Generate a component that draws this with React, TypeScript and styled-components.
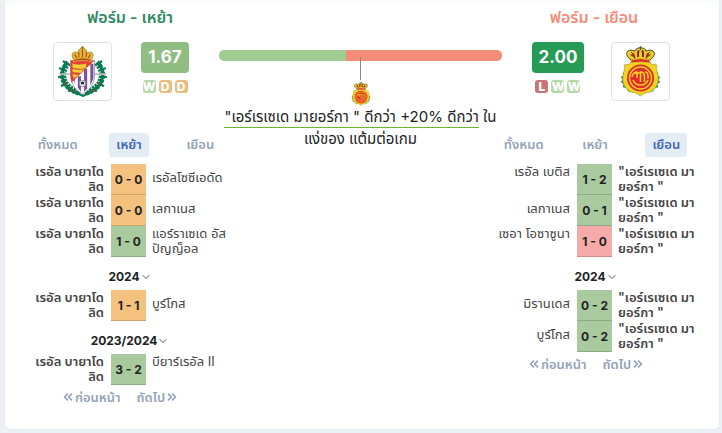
import React, { useState } from "react";
import styled, { createGlobalStyle } from "styled-components";
import { FiChevronDown, FiChevronsLeft, FiChevronsRight } from "react-icons/fi";

const GlobalStyle = createGlobalStyle`
  * { box-sizing: border-box; }
  body {
    margin: 0;
    background: #edf1f5;
    color: #222;
    font-family: Inter, "Noto Sans Thai", "Noto Sans", sans-serif;
    font-size: 13px;
  }
  button { font: inherit; border: 0; background: none; padding: 0; cursor: pointer; }
`;

type Side = "home" | "away";
type Outcome = "W" | "D" | "L";

const Card = styled.main`
  display: grid;
  grid-template-columns: 190px minmax(0, 1fr) 190px;
  margin: 0 3px 5px 5px;
  padding: 7px 32px 22px 26px;
  background: linear-gradient(#f8fafa, #fff 6px);
  border-radius: 0 0 5px 5px;
  box-shadow: 0 1px 3px #e3e8ee;
`;

const TeamPanel = styled.section`
  display: flex;
  flex-direction: column;
  min-width: 0;
`;

const Title = styled.h2<{ $side: Side }>`
  margin: 0 0 15px;
  padding-left: ${(p) => (p.$side === "home" ? 8 : 4)}px;
  text-align: center;
  font-size: 16px;
  line-height: 20px;
  font-weight: 600;
  color: ${(p) => (p.$side === "home" ? "#2f8a63" : "#f58b78")};
`;

const Summary = styled.div<{ $side: Side }>`
  display: flex;
  flex-direction: ${(p) => (p.$side === "home" ? "row" : "row-reverse")};
  justify-content: center;
  gap: ${(p) => (p.$side === "home" ? 29 : 27)}px;
  height: 59px;
  padding: ${(p) => (p.$side === "home" ? "0 10px 0 0" : "0 0 0 18px")};
`;

const CrestBox = styled.div`
  width: 59px;
  height: 59px;
  padding: 3px;
  border: 1px solid #dfe1ea;
  border-radius: 4px;
  background: #fff;
  svg { display: block; width: 100%; height: 100%; }
`;

const Form = styled.div`
  display: flex;
  flex-direction: column;
  align-items: center;
  gap: 7px;
`;

const Points = styled.strong<{ $side: Side }>`
  padding: 0 7px;
  border-radius: 4px;
  font-size: 17px;
  line-height: 31px;
  font-weight: 700;
  color: #fff;
  background: ${(p) => (p.$side === "home" ? "#90bd82" : "#259b55")};
`;

const Results = styled.div`
  display: flex;
  gap: 3px;
`;

const badgeColors: Record<Outcome, string> = { W: "#b4d8a6", D: "#e9bd7d", L: "#c97475" };

const ResultBadge = styled.span<{ $result: Outcome }>`
  display: flex;
  justify-content: center;
  width: 13px;
  height: 13px;
  border-radius: 3px;
  font-size: 12px;
  line-height: 13px;
  font-weight: 800;
  color: #fff;
  background: ${(p) => badgeColors[p.$result]};
`;

const Tabs = styled.div`
  display: grid;
  grid-template-columns: repeat(3, 1fr);
  justify-items: center;
  margin: 32px -15px 7px -9px;
`;

const Tab = styled.button<{ $active: boolean }>`
  height: 24px;
  padding: 0 7px 2px;
  border-radius: 3px;
  white-space: nowrap;
  font-size: 13px;
  line-height: 22px;
  font-weight: 600;
  color: ${(p) => (p.$active ? "#4267b5" : "#94a3b8")};
  background: ${(p) => (p.$active ? "#e4ecf6" : "transparent")};
`;

const Matches = styled.table`
  width: 202px;
  table-layout: fixed;
  border-collapse: collapse;
`;

const Col = styled.col<{ $w: number }>`
  width: ${(p) => p.$w}px;
`;

const Name = styled.td<{ $strong: boolean; $first: boolean; $low: boolean }>`
  padding: ${(p) => (p.$low ? 6 : 0)}px ${(p) => (p.$first ? 7 : 0)}px 0 ${(p) => (p.$first ? 0 : 6)}px;
  vertical-align: top;
  text-align: ${(p) => (p.$first ? "right" : "left")};
  white-space: pre;
  font-size: 13px;
  line-height: 15px;
  font-weight: ${(p) => (p.$strong ? 600 : 400)};
  color: #444;
`;

const scoreColors: Record<Outcome, [string, string]> = {
  W: ["#a8ca9e", "#8cab84"],
  D: ["#f5c17f", "#cba36d"],
  L: ["#f6aba8", "#cc908e"],
};

const Score = styled.td<{ $result: Outcome }>`
  height: 31px;
  padding: 0;
  text-align: center;
  white-space: nowrap;
  font-size: 12px;
  font-weight: 700;
  background: ${(p) => scoreColors[p.$result][0]};
  box-shadow: inset 0 -1px ${(p) => scoreColors[p.$result][1]};
`;

const SeasonCell = styled.th`
  height: 33px;
  padding: 6px 4px 0 0;
`;

const SeasonButton = styled.button`
  display: inline-flex;
  align-items: center;
  font-size: 12px;
  line-height: 20px;
  font-weight: 700;
  color: #222;
  svg { width: 12px; height: 12px; color: #555; }
`;

const Pager = styled.nav`
  display: flex;
  justify-content: center;
  gap: 16px;
  padding-right: 12px;
  margin-top: 2px;
`;

const PageButton = styled.button`
  display: inline-flex;
  align-items: center;
  font-size: 13px;
  line-height: 20px;
  font-weight: 600;
  white-space: nowrap;
  color: #94a3b8;
  svg { width: 14px; height: 14px; stroke-width: 3; }
`;

const Comparison = styled.section`
  display: flex;
  flex-direction: column;
  align-items: center;
  margin: 43px -5px 0 -2px;
  height: 108px;
`;

const Bar = styled.div`
  display: flex;
  width: 100%;
  height: 11px;
  border-radius: 5px;
  overflow: hidden;
`;

const Share = styled.div<{ $side: Side }>`
  flex: ${(p) => (p.$side === "home" ? 45 : 55)};
  background: ${(p) => (p.$side === "home" ? "#a2cd92" : "#f58c77")};
`;

const Pointer = styled.div`
  width: 1px;
  height: 23px;
  margin-top: -4px;
  background: #888;
  z-index: 1;
`;

const SmallCrest = styled.div`
  width: 24px;
  height: 24px;
  margin-top: 2px;
  svg { display: block; width: 100%; height: 100%; }
`;

const Verdict = styled.p`
  margin: 0;
  text-align: center;
  white-space: nowrap;
  font-size: 15px;
  line-height: 22px;
  color: #222;
`;

const Highlight = styled.span`
  display: inline-block;
  height: 21px;
  line-height: 20px;
  border-bottom: 1px solid #6cb52d;
`;

function HomeCrest() {
  return (
    <svg viewBox="1 0 49 49" role="img" aria-label="เรอัล บายาโดลิด">
      <g fill="none" stroke="#087a50">
        <g strokeWidth="3">
          <path d="M11 16C2 25 5 41 23 46" />
          <path d="M40 16C49 25 46 41 28 46" />
        </g>
        <g strokeWidth="6" strokeDasharray="2.5 1">
          <path d="M12 16C3 25 5 40 23 45" />
          <path d="M39 16C48 25 46 40 28 45" />
        </g>
        <path d="m9 17-2-3m0 9-4-2m4 8-5 1m7 5-4 4m9 1-2 4M42 17l2-3m0 9 4-2m-4 8 5 1m-7 5 4 4m-9 1 2 4M20 45l6 3 6-3" strokeWidth="2" />
      </g>
      <g fill="#d82c35">
        <circle cx="5" cy="27" r="1" /><circle cx="9" cy="36" r="1" /><circle cx="15" cy="43" r="1" />
        <circle cx="46" cy="27" r="1" /><circle cx="42" cy="36" r="1" /><circle cx="36" cy="43" r="1" />
      </g>
      <path d="M3 27h45" stroke="#b8bec1" strokeWidth="1.6" />
      <path d="M14 14h23v14c0 8-5 15-11.500 18C19 43 14 36 14 28Z" fill="#fff" stroke="#7a6598" strokeWidth=".6" />
      <path d="M33 17h3v14l-3 7ZM27 22h3v19l-3 3ZM21 29h3v15l-3-4ZM16 31h2v5Z" fill="#7953a0" />
      <path d="M14 14h23L15 35c-1-4-1-8-1-21Z" fill="#e63c38" />
      <path d="m16 17 6 1 7-1v4l-5 1-8-1Zm0 5 7 1 4-1-3 4-8-1Zm0 5 6 1-5 3Z" fill="#f7d13b" stroke="#cf9b22" strokeWidth=".4" />
      <circle cx="25.500" cy="36" r="3" fill="#fff" stroke="#777" strokeWidth=".7" />
      <path d="m23.500 35 2-1 2 1-1 2h-2Z" fill="#292933" />
      <path d="M17 13c-4-6 1-9 4-6 0-4 3-5 4.500-5S30 3 30 7c4-3 8 0 4 6Z" fill="#e0b92d" stroke="#8b6b20" strokeWidth=".6" />
      <path d="M20 12 18 8m4 3V6m3.500 5V3m3.500 8V6m2 6 2-4" stroke="#b63c34" strokeWidth="1" />
      <path d="M17 13q8.500-3 17 0v2q-8.500-2-17 0Z" fill="#be3030" stroke="#d6ae29" />
      <path d="M25.500 0v4M24 1.500h3" stroke="#9c7920" />
    </svg>
  );
}

function AwayCrest() {
  return (
    <svg viewBox="0 0 51 51" role="img" aria-label="เอร์เรเซเด มายอร์กา">
      <g fill="#3f9d6c" stroke="#16754f" strokeWidth=".5">
        <path d="m11 25-3 2 1 3-3 1 2 3-2 2 3 2-1 3 4 1 1 3 5 1V25ZM40 25l3 2-1 3 3 1-2 3 2 2-3 2 1 3-4 1-1 3-5 1V25Z" />
      </g>
      <path d="M16 16h19l1 2 6 1c-2 3 1 7 1 11 1 7-2 13-8 16l-5 1-4.500 3L21 47l-5-1C10 43 7 37 8 30c0-4 3-8 1-11l6-1Z" fill="#f0d51f" stroke="#9f8b21" strokeWidth=".6" />
      <circle cx="25.500" cy="32" r="13.500" fill="#e52a2e" />
      <circle cx="25.500" cy="32" r="11" fill="none" stroke="#f7d61f" strokeWidth="1.300" />
      <g fill="none" stroke="#f7d61f" strokeWidth="1.500">
        <path d="M17 31q1-5 5-5v6M25.500 25v11M25.500 26q4 0 4 5v5M30 26q3 0 3 4v3M19 27h6" />
        <path d="M18 34q2 5 7.500 5t7.500-5" />
      </g>
      <path d="M16 14C8 8 12 2 20 5c1-3 3-3 5.500-3S30 2 31 5c8-3 12 3 4 9Z" fill="#e6cc27" stroke="#38351f" strokeWidth=".9" />
      <path d="m15 9 4-2 1 5Zm7-4 2-1v7h-2Zm5-1 2 1v6h-2Zm5 3 4 2-5 3Z" fill="#c82631" />
      <path d="M16 6q4 2 4 7m4-9-1 7m4-7 1 7m7-5q-4 2-4 7" fill="none" stroke="#3d382c" strokeWidth=".9" />
      <path d="M16 14q9.500-3 19 0v3q-9.500-2-19 0Z" fill="#dc2b2d" stroke="#e0c026" />
      <path d="M25.500 0v4M24 1.500h3" stroke="#6f6626" />
    </svg>
  );
}

interface Match {
  left: string;
  right: string;
  score: string;
  result: Outcome;
  low?: boolean;
  season?: string;
}

interface Team {
  side: Side;
  title: string;
  points: string;
  form: Outcome[];
  tab: number;
  matches: Match[];
}

const home = "เรอัล บายาโด\nลิด";
const away = '"เอร์เรเซเด มา\nยอร์กา "';

const teams: Record<Side, Team> = {
  home: {
    side: "home",
    title: "ฟอร์ม - เหย้า",
    points: "1.67",
    form: ["W", "D", "D"],
    tab: 1,
    matches: [
      { left: home, right: "เรอัลโซซีเอดัด", score: "0 - 0", result: "D", low: true },
      { left: home, right: "เลกาเนส", score: "0 - 0", result: "D", low: true },
      { left: home, right: "แอร์ราเซเด อัส\nปัญญ็อล", score: "1 - 0", result: "W" },
      { left: home, right: "บูร์โกส", score: "1 - 1", result: "D", low: true, season: "2024" },
      { left: home, right: "บียาร์เรอัล II", score: "3 - 2", result: "W", season: "2023/2024" },
    ],
  },
  away: {
    side: "away",
    title: "ฟอร์ม - เยือน",
    points: "2.00",
    form: ["L", "W", "W"],
    tab: 2,
    matches: [
      { left: "เรอัล เบติส", right: away, score: "1 - 2", result: "W" },
      { left: "เลกาเนส", right: away, score: "0 - 1", result: "W", low: true },
      { left: "เซอา โอซาซูนา", right: away, score: "1 - 0", result: "L" },
      { left: "มิรานเดส", right: away, score: "0 - 2", result: "W", low: true, season: "2024" },
      { left: "บูร์โกส", right: away, score: "0 - 2", result: "W", low: true },
    ],
  },
};

const tabLabels = ["ทั้งหมด", "เหย้า", "เยือน"];

function TeamForm({ team }: { team: Team }) {
  const [tab, setTab] = useState(team.tab);
  const isHome = team.side === "home";
  return (
    <TeamPanel>
      <Title $side={team.side}>{team.title}</Title>
      <Summary $side={team.side}>
        <CrestBox>{isHome ? <HomeCrest /> : <AwayCrest />}</CrestBox>
        <Form>
          <Points $side={team.side}>{team.points}</Points>
          <Results>
            {team.form.map((r, i) => <ResultBadge key={i} $result={r}>{r}</ResultBadge>)}
          </Results>
        </Form>
      </Summary>
      <Tabs role="tablist">
        {tabLabels.map((label, i) => (
          <Tab key={label} role="tab" aria-selected={tab === i} $active={tab === i} onClick={() => setTab(i)}>
            {label}
          </Tab>
        ))}
      </Tabs>
      <Matches>
        <colgroup><Col $w={80} /><Col $w={35} /><Col $w={87} /></colgroup>
        <tbody>
          {team.matches.map((m, i) => (
            <React.Fragment key={i}>
              {m.season && (
                <tr>
                  <SeasonCell colSpan={3}>
                    <SeasonButton>{m.season}<FiChevronDown /></SeasonButton>
                  </SeasonCell>
                </tr>
              )}
              <tr>
                <Name $first $strong={isHome} $low={!isHome && !!m.low}>{m.left}</Name>
                <Score $result={m.result}>{m.score}</Score>
                <Name $first={false} $strong={!isHome} $low={isHome && !!m.low}>{m.right}</Name>
              </tr>
            </React.Fragment>
          ))}
        </tbody>
      </Matches>
      <Pager>
        <PageButton><FiChevronsLeft />ก่อนหน้า</PageButton>
        <PageButton>ถัดไป<FiChevronsRight /></PageButton>
      </Pager>
    </TeamPanel>
  );
}

export default function App() {
  return (
    <>
      <GlobalStyle />
      <Card>
        <TeamForm team={teams.home} />
        <Comparison>
          <Bar><Share $side="home" /><Share $side="away" /></Bar>
          <Pointer />
          <SmallCrest><AwayCrest /></SmallCrest>
          <Verdict>
            <Highlight>"เอร์เรเซเด มายอร์กา " ดีกว่า +20% ดีกว่า</Highlight> ใน<br />แง่ของ แต้มต่อเกม
          </Verdict>
        </Comparison>
        <TeamForm team={teams.away} />
      </Card>
    </>
  );
}
